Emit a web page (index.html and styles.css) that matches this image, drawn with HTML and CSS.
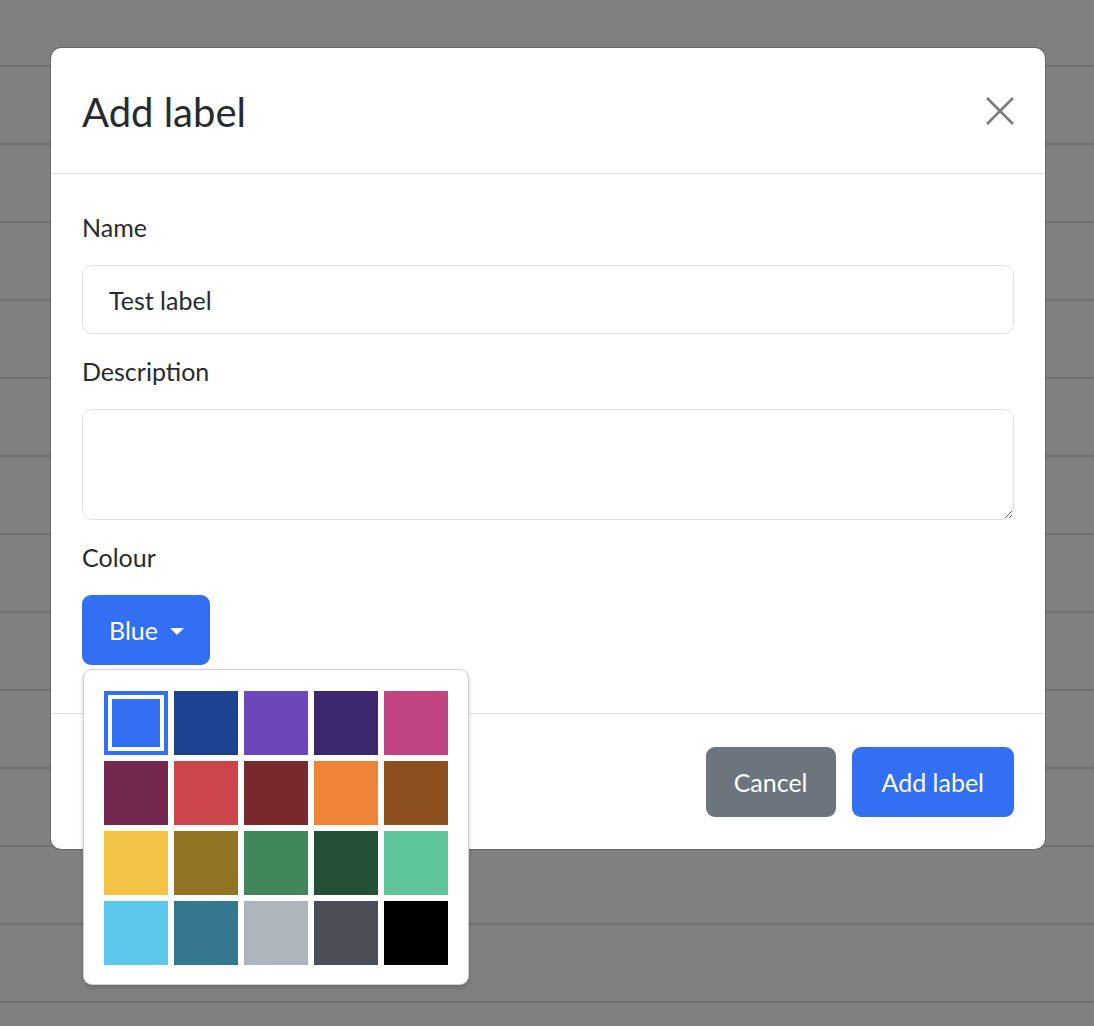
FILE: index.html
```html
<!DOCTYPE html>
<html lang="en">
<head>
<meta charset="utf-8">
<title>Add label</title>
<link rel="stylesheet" href="styles.css">
</head>
<body>
<div class="backdrop">
  <div class="modal">
    <div class="modal-header">
      <h5 class="modal-title">Add label</h5>
      <button class="close" type="button" aria-label="Close">
        <svg width="28" height="28" viewBox="0 0 28 28"><path d="M1 1L27 27M27 1L1 27" stroke="#7d7d7d" stroke-width="2.6" fill="none"/></svg>
      </button>
    </div>
    <div class="modal-body">
      <div class="group">
        <label class="label">Name</label>
        <input class="field" type="text" value="Test label">
      </div>
      <div class="group">
        <label class="label">Description</label>
        <textarea class="field area"></textarea>
      </div>
      <div class="group last">
        <label class="label">Colour</label>
        <div class="dropdown">
          <button class="btn btn-primary toggle" type="button">Blue<span class="caret"></span></button>
          <div class="menu">
            <div class="swatches">
              <span class="sw selected" style="background:#336ff3"></span>
              <span class="sw" style="background:#1c4391"></span>
              <span class="sw" style="background:#6c46bb"></span>
              <span class="sw" style="background:#3d2870"></span>
              <span class="sw" style="background:#c34482"></span>
              <span class="sw" style="background:#74274f"></span>
              <span class="sw" style="background:#cb454b"></span>
              <span class="sw" style="background:#79282c"></span>
              <span class="sw" style="background:#ed8436"></span>
              <span class="sw" style="background:#8e4f1f"></span>
              <span class="sw" style="background:#f3c345"></span>
              <span class="sw" style="background:#917525"></span>
              <span class="sw" style="background:#41875b"></span>
              <span class="sw" style="background:#245036"></span>
              <span class="sw" style="background:#5fc69a"></span>
              <span class="sw" style="background:#5bc7ed"></span>
              <span class="sw" style="background:#35778e"></span>
              <span class="sw" style="background:#aeb4bb"></span>
              <span class="sw" style="background:#4a4f57"></span>
              <span class="sw" style="background:#000000"></span>
            </div>
          </div>
        </div>
      </div>
    </div>
    <div class="modal-footer">
      <button class="btn btn-secondary" type="button">Cancel</button>
      <button class="btn btn-primary wide" type="button">Add label</button>
    </div>
  </div>
</div>
</body>
</html>
```
FILE: styles.css
```css
* { box-sizing: border-box; }
html, body { margin: 0; padding: 0; }
body {
  font-family: Lato, "Open Sans", sans-serif;
  color: #272b30;
  background: repeating-linear-gradient(to bottom, #808080 0 65px, #6f7173 65px 67px, #808080 67px 78px);
  min-height: 1026px;
  overflow: hidden;
}
.backdrop {
  padding: 47px 0 0 50px;
}
.modal {
  width: 996px;
  background: #fff;
  border: 1px solid rgba(0,0,0,.18);
  border-radius: 11px;
  background-clip: padding-box;
}
.modal-header {
  height: 126px;
  padding: 0 31px;
  display: flex;
  align-items: center;
  justify-content: space-between;
  border-bottom: 1px solid #dee2e6;
}
.modal-title {
  margin: 0;
  font-size: 40px;
  font-weight: 400;
  line-height: 1.2;
  padding-top: 2px;
}
.close {
  background: none;
  border: 0;
  padding: 0;
  width: 28px;
  height: 28px;
  display: flex;
}
.modal-body {
  padding: 35px 31px 48px;
}
.group { margin-bottom: 19px; }
.group.last { margin-bottom: 0; }
.label {
  display: block;
  font-size: 25px;
  line-height: 37px;
  margin-bottom: 19px;
}
.field {
  display: block;
  width: 100%;
  height: 69px;
  border: 1px solid #dee2e6;
  border-radius: 10px;
  padding: 0 26px;
  font: inherit;
  font-size: 25px;
  color: #272b30;
  background: #fff;
  outline: none;
}
.area {
  height: 111px;
  resize: vertical;
  padding: 14px 26px;
}
.btn {
  font: inherit;
  font-size: 25px;
  height: 70px;
  border: 0;
  border-radius: 9px;
  padding: 0 28px;
  color: #fff;
  display: inline-flex;
  align-items: center;
}
.btn.wide { padding: 0 30px; }
.btn-primary { background: #336ff3; }
.btn-secondary { background: #6c757d; }
.toggle { padding: 0 26px 0 27px; }
.caret {
  display: inline-block;
  margin-left: 12px;
  width: 0;
  height: 0;
  border-left: 7px solid transparent;
  border-right: 7px solid transparent;
  border-top: 7px solid #fff;
  margin-top: 3px;
}
.dropdown { position: relative; }
.menu {
  position: absolute;
  top: 74px;
  left: 1px;
  z-index: 5;
  width: 386px;
  background: #fff;
  border: 1px solid rgba(0,0,0,.18);
  border-radius: 9px;
  padding: 21px 20px 19px;
  box-shadow: 0 2px 4px rgba(0,0,0,.18);
}
.swatches {
  display: grid;
  grid-template-columns: repeat(5, 64px);
  grid-auto-rows: 64px;
  gap: 6px;
}
.sw { display: block; }
.sw.selected {
  box-shadow: inset 0 0 0 4px #336ff3, inset 0 0 0 8px #fff;
}
.modal-footer {
  border-top: 1px solid #dee2e6;
  padding: 33px 31px 32px;
  display: flex;
  justify-content: flex-end;
  gap: 16px;
}
```
